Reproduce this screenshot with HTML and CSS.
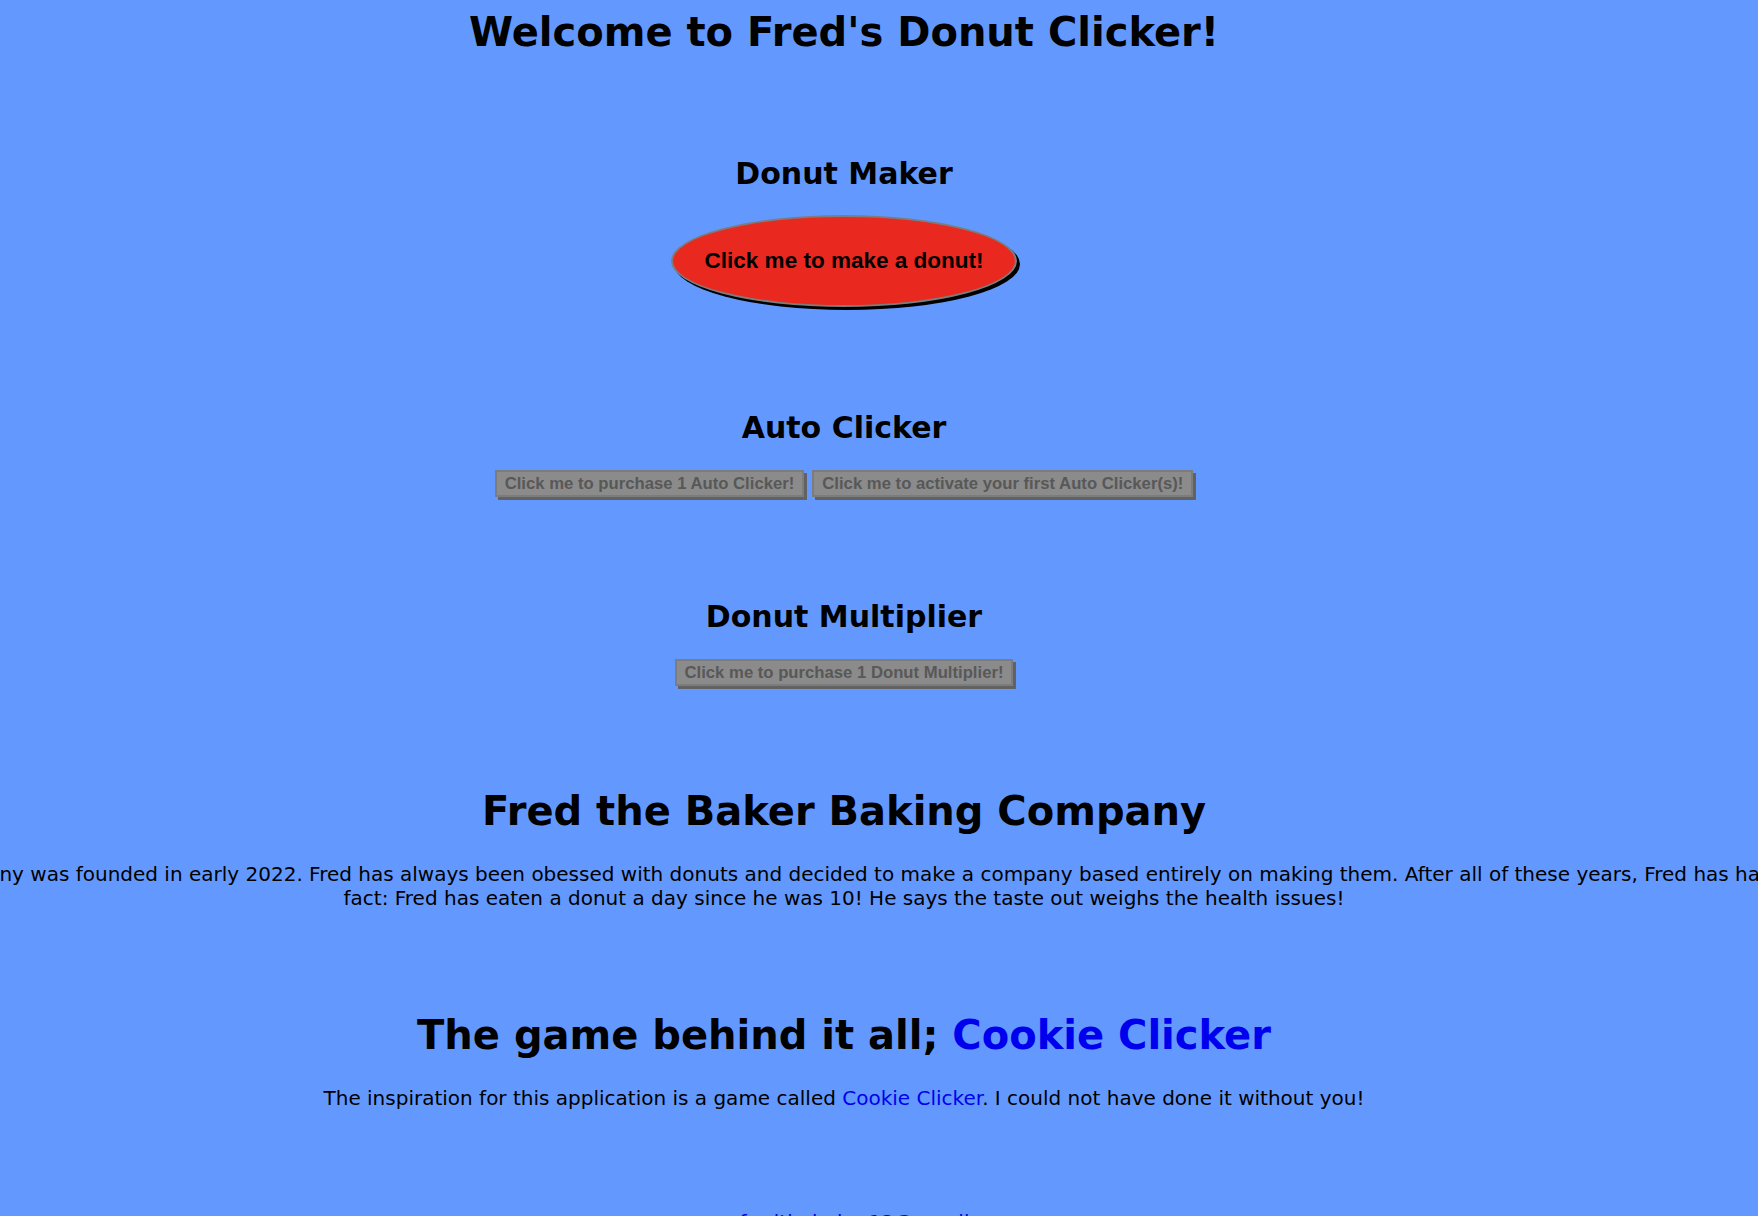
FILE: index.html
```html
<!DOCTYPE html>
<html lang="en">
<head>
<meta charset="utf-8">
<title>Fred's Donut Clicker</title>
<link rel="stylesheet" href="styles.css">
</head>
<body>
<main class="page">
  <h1 class="title">Welcome to Fred's Donut Clicker!</h1>

  <section class="panel panel-maker">
    <h2 class="panel-title">Donut Maker</h2>
    <button class="donut-btn" type="button">Click me to make a donut!</button>
  </section>

  <section class="panel panel-auto">
    <h2 class="panel-title">Auto Clicker</h2>
    <div class="btn-row">
      <button class="shop-btn" type="button" disabled>Click me to purchase 1 Auto Clicker!</button>
      <button class="shop-btn" type="button" disabled>Click me to activate your first Auto Clicker(s)!</button>
    </div>
  </section>

  <section class="panel panel-multi">
    <h2 class="panel-title">Donut Multiplier</h2>
    <div class="btn-row">
      <button class="shop-btn" type="button" disabled>Click me to purchase 1 Donut Multiplier!</button>
    </div>
  </section>

  <section class="about about-company">
    <h1 class="about-title">Fred the Baker Baking Company</h1>
    <p class="story">Fred the Baker Baking Company was founded in early 2022. Fred has always been obessed with donuts and decided to make a company based entirely on making them. After all of these years, Fred has had no regrets at all. Fun fact: Fred has eaten a donut a day since he was 10! He says the taste out weighs the health issues!</p>
  </section>

  <section class="about about-game">
    <h1 class="about-title">The game behind it all; <a class="link" href="#">Cookie Clicker</a></h1>
    <p class="note">The inspiration for this application is a game called <a class="link" href="#">Cookie Clicker</a>. I could not have done it without you!</p>
  </section>
</main>
<footer class="footer">
  <a class="link" href="#">fredthebaker12@gmail.com</a>
</footer>
</body>
</html>
```

FILE: styles.css
```css
html, body {
  margin: 0;
  padding: 0;
}

body {
  background: #6399ff;
  color: #000;
  font-family: "DejaVu Sans", Verdana, sans-serif;
  font-size: 20px;
  overflow: hidden;
}

.page {
  width: 1688px;
  display: flex;
  flex-direction: column;
  align-items: center;
  text-align: center;
}

.title {
  margin: 9px 0 0;
  font-size: 40px;
  font-weight: bold;
  line-height: normal;
}

.panel {
  display: flex;
  flex-direction: column;
  align-items: center;
}

.panel-maker { margin-top: 101px; }
.panel-auto { margin-top: 103px; }
.panel-multi { margin-top: 102px; }

.panel-title {
  margin: 0;
  font-size: 30px;
  font-weight: bold;
  line-height: normal;
}

.donut-btn {
  margin-top: 24px;
  width: 346px;
  height: 92px;
  border: 2px solid #7d7d7d;
  border-radius: 50%;
  background: #e9291f;
  color: #000;
  font-family: "Liberation Sans", Arial, sans-serif;
  font-size: 22.5px;
  font-weight: bold;
  box-shadow: 3px 3px 0 #000;
  padding: 0;
}

.btn-row {
  margin-top: 25px;
  display: flex;
  gap: 8px;
}

.panel-multi .btn-row { margin-top: 25px; }

.shop-btn {
  border: 2px solid #7c7c7c;
  background: #8b8b8b;
  color: #585858;
  font-family: "Liberation Sans", Arial, sans-serif;
  font-size: 16.7px;
  font-weight: bold;
  line-height: 19px;
  padding: 2px 8px;
  box-shadow: 3px 3px 0 #626262;
}

.about {
  display: flex;
  flex-direction: column;
  align-items: center;
}

.about-company { margin-top: 102px; }
.about-game { margin-top: 102px; }

.about-title {
  margin: 0;
  font-size: 40px;
  font-weight: bold;
  line-height: normal;
}

.story {
  margin: 28px 0 0;
  width: 2300px;
  flex-shrink: 0;
}

.note {
  margin: 28px 0 0;
}

.link {
  color: #0000ee;
  text-decoration: none;
}

.footer {
  margin-top: 100px;
  text-align: center;
}
```
